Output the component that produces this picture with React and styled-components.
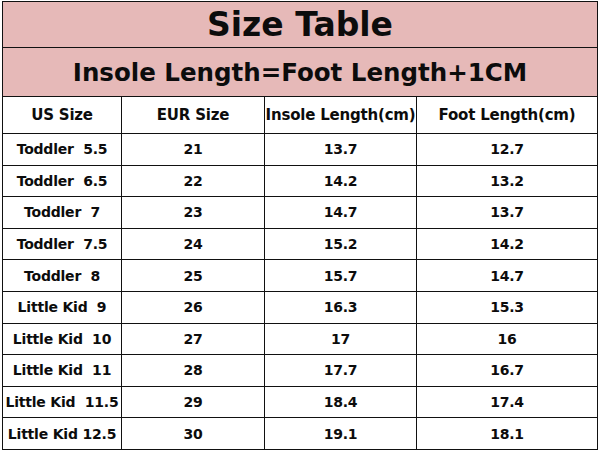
import styled, { createGlobalStyle } from "styled-components";

const Global = createGlobalStyle`
  body {
    margin: 0;
    background: #fff;
    font-family: "DejaVu Sans", Verdana, sans-serif;
  }
`;

const rows = [
  ["Toddler  5.5", "21", "13.7", "12.7"],
  ["Toddler  6.5", "22", "14.2", "13.2"],
  ["Toddler  7", "23", "14.7", "13.7"],
  ["Toddler  7.5", "24", "15.2", "14.2"],
  ["Toddler  8", "25", "15.7", "14.7"],
  ["Little Kid  9", "26", "16.3", "15.3"],
  ["Little Kid  10", "27", "17", "16"],
  ["Little Kid  11", "28", "17.7", "16.7"],
  ["Little Kid  11.5", "29", "18.4", "17.4"],
  ["Little Kid 12.5", "30", "19.1", "18.1"],
];

export default function App() {
  return (
    <>
      <Global />
      <Sheet>
        <Table>
          <colgroup>
            <col style={{ width: 119 }} />
            <col style={{ width: 143 }} />
            <col style={{ width: 152 }} />
            <col style={{ width: 181 }} />
          </colgroup>
          <tbody>
            <tr>
              <Banner colSpan={4} $size={33} $h={45}>Size Table</Banner>
            </tr>
            <tr>
              <Banner colSpan={4} $size={24.5} $h={48}>Insole Length=Foot Length+1CM</Banner>
            </tr>
            <tr>
              <Head>US Size</Head>
              <Head>EUR Size</Head>
              <Head>Insole Length(cm)</Head>
              <Head>Foot Length(cm)</Head>
            </tr>
            {rows.map((r, i) => (
              <tr key={i}>
                {r.map((v, j) => (
                  <Cell key={j}>{v}</Cell>
                ))}
              </tr>
            ))}
            <tr>
              <Cell />
              <Cell />
              <Cell />
              <Cell />
            </tr>
          </tbody>
        </Table>
      </Sheet>
    </>
  );
}

const Sheet = styled.div`
  width: 600px;
  height: 450px;
  overflow: hidden;
  padding: 1px 0 0 2px;
  box-sizing: border-box;
`;

const Table = styled.table`
  border-collapse: collapse;
  table-layout: fixed;
  width: 595px;
  color: #0c0c0c;
  font-weight: bold;
  td {
    border: 1px solid #111;
    padding: 0;
    text-align: center;
    white-space: pre;
  }
`;

const Banner = styled.td`
  background: #e6b9b8;
  font-size: ${(p) => p.$size}px;
  height: ${(p) => p.$h}px;
`;

const Head = styled.td`
  height: 36px;
  font-size: 15px;
  letter-spacing: -0.2px;
`;

const Cell = styled.td`
  height: 30.6px;
  font-size: 14px;
  letter-spacing: -0.2px;
`;
